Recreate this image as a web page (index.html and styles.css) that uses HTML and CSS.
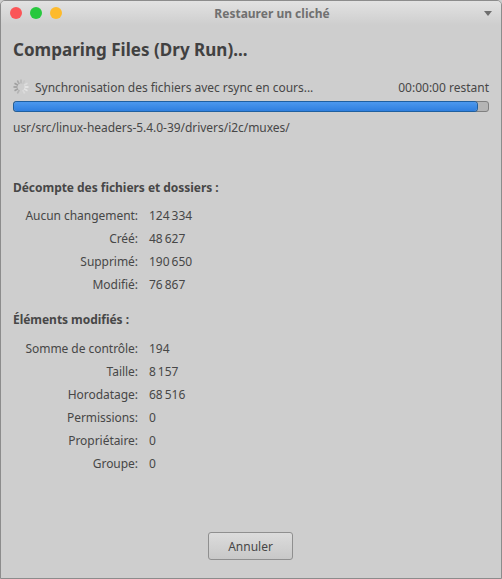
FILE: index.html
```html
<!DOCTYPE html>
<html lang="fr">
<head>
    <meta charset="UTF-8">
    <title>Restaurer un cliché</title>
    <link rel="stylesheet" href="styles.css">
</head>
<body>
    <div class="window">
        <div class="titlebar">
            <div class="traffic">
                <span class="dot red"></span>
                <span class="dot green"></span>
                <span class="dot yellow"></span>
            </div>
            <div class="window-title">Restaurer un cliché</div>
            <div class="menu-arrow"></div>
        </div>

        <div class="content">
            <div class="heading">Comparing Files (Dry Run)...</div>

            <div class="status-row">
                <svg class="spinner" width="16" height="16" viewBox="0 0 16 16">
                    <g stroke-width="1.6" stroke-linecap="butt" fill="none">
                        <path d="M8 0.5v4" stroke="#b8b8b8"/>
                        <path d="M11.7 1.5l-2 3.5" stroke="#c6c6c6"/>
                        <path d="M14.5 4.3l-3.5 2" stroke="#dcdcdc"/>
                        <path d="M15.5 8h-4" stroke="#eaeaea"/>
                        <path d="M14.5 11.7l-3.5-2" stroke="#e4e4e4"/>
                        <path d="M11.7 14.5l-2-3.5" stroke="#dadada"/>
                        <path d="M8 15.5v-4" stroke="#d0d0d0"/>
                        <path d="M4.3 14.5l2-3.5" stroke="#b4b4b4"/>
                        <path d="M1.5 11.7l3.5-2" stroke="#a0a0a0"/>
                        <path d="M0.5 8h4" stroke="#989898"/>
                        <path d="M1.5 4.3l3.5 2" stroke="#9e9e9e"/>
                        <path d="M4.3 1.5l2 3.5" stroke="#aaaaaa"/>
                    </g>
                </svg>
                <span class="status-text">Synchronisation des fichiers avec rsync en cours...</span>
                <span class="eta">00:00:00 restant</span>
            </div>

            <div class="progress"><div class="progress-fill" style="width: 97.6%"></div></div>
            <div class="path">usr/src/linux-headers-5.4.0-39/drivers/i2c/muxes/</div>

            <div class="section-title first">Décompte des fichiers et dossiers :</div>
            <div class="stats">
                <div class="label">Aucun changement:</div><div class="value">124&#8239;334</div>
                <div class="label">Créé:</div><div class="value">48&#8239;627</div>
                <div class="label">Supprimé:</div><div class="value">190&#8239;650</div>
                <div class="label">Modifié:</div><div class="value">76&#8239;867</div>
            </div>

            <div class="section-title second">Éléments modifiés :</div>
            <div class="stats second-stats">
                <div class="label">Somme de contrôle:</div><div class="value">194</div>
                <div class="label">Taille:</div><div class="value">8&#8239;157</div>
                <div class="label">Horodatage:</div><div class="value">68&#8239;516</div>
                <div class="label">Permissions:</div><div class="value">0</div>
                <div class="label">Propriétaire:</div><div class="value">0</div>
                <div class="label">Groupe:</div><div class="value">0</div>
            </div>

            <div class="actions">
                <button class="button">Annuler</button>
            </div>
        </div>
    </div>
</body>
</html>
```

FILE: styles.css
```css
html, body {
    margin: 0;
    height: 100%;
}
body {
    font-family: "Noto Sans", sans-serif;
    font-size: 12px;
    letter-spacing: -0.04px;
    color: #474747;
    background-color: #cecece;
}
.window {
    box-sizing: border-box;
    width: 502px;
    height: 579px;
    display: flex;
    flex-direction: column;
    background-color: #cecece;
    border: 1px solid #8c8c8c;
    border-radius: 5px 5px 0 0;
    overflow: hidden;
}
.titlebar {
    height: 24px;
    flex: none;
    display: flex;
    align-items: center;
    position: relative;
    background: linear-gradient(#e2e2e2, #cecece);
}
.traffic {
    display: flex;
    gap: 8px;
    margin-left: 9px;
}
.dot {
    width: 12px;
    height: 12px;
    border-radius: 50%;
}
.red { background-color: #fb5557; }
.green { background-color: #28c83e; }
.yellow { background-color: #fdba2c; }
.window-title {
    position: absolute;
    left: 42px;
    right: 0;
    text-align: center;
    font-weight: bold;
    letter-spacing: 0;
    color: #707070;
    font-size: 12px;
}
.menu-arrow {
    position: absolute;
    right: 9px;
    top: 10px;
    width: 0;
    height: 0;
    border-left: 4px solid transparent;
    border-right: 4px solid transparent;
    border-top: 5px solid #6e6e6e;
}
.content {
    flex: 1;
    display: flex;
    flex-direction: column;
    padding: 0 12px 0 12px;
}
.heading {
    font-size: 17px;
    font-weight: bold;
    letter-spacing: 0.03px;
    line-height: 22px;
    margin-top: 14px;
    color: #414141;
}
.status-row {
    display: flex;
    align-items: center;
    height: 18px;
    margin-top: 17px;
}
.spinner {
    flex: none;
    margin-right: 6px;
}
.status-text {
    flex: 1;
}
.eta {
    letter-spacing: 0;
}
.progress {
    height: 9px;
    margin-top: 5px;
    background-color: #b5b5b5;
    border: 1px solid #808080;
    border-radius: 3px;
}
.progress-fill {
    height: 100%;
    background: linear-gradient(#4c98ee, #2f7fdf);
    box-shadow: 0 0 0 1px #1f5f9f;
    border-radius: 3px;
}
.path {
    line-height: 18px;
    margin-top: 7px;
}
.section-title {
    font-weight: bold;
    line-height: 18px;
}
.section-title.first {
    margin-top: 42px;
}
.section-title.second {
    margin-top: 17px;
}
.stats {
    display: grid;
    grid-template-columns: 125px auto;
    column-gap: 11px;
    row-gap: 5px;
    margin-top: 10px;
}
.second-stats {
    margin-top: 11px;
}
.label {
    text-align: right;
    line-height: 18px;
}
.value {
    line-height: 18px;
}
.actions {
    margin-top: auto;
    margin-bottom: 18px;
    display: flex;
    justify-content: center;
}
.button {
    width: 85px;
    height: 28px;
    margin-right: 1px;
    font-family: inherit;
    font-size: 12px;
    color: #474747;
    background: linear-gradient(#dcdcdc, #c8c8c8);
    border: 1px solid #8f8f8f;
    border-radius: 3px;
    padding: 0;
}
```
